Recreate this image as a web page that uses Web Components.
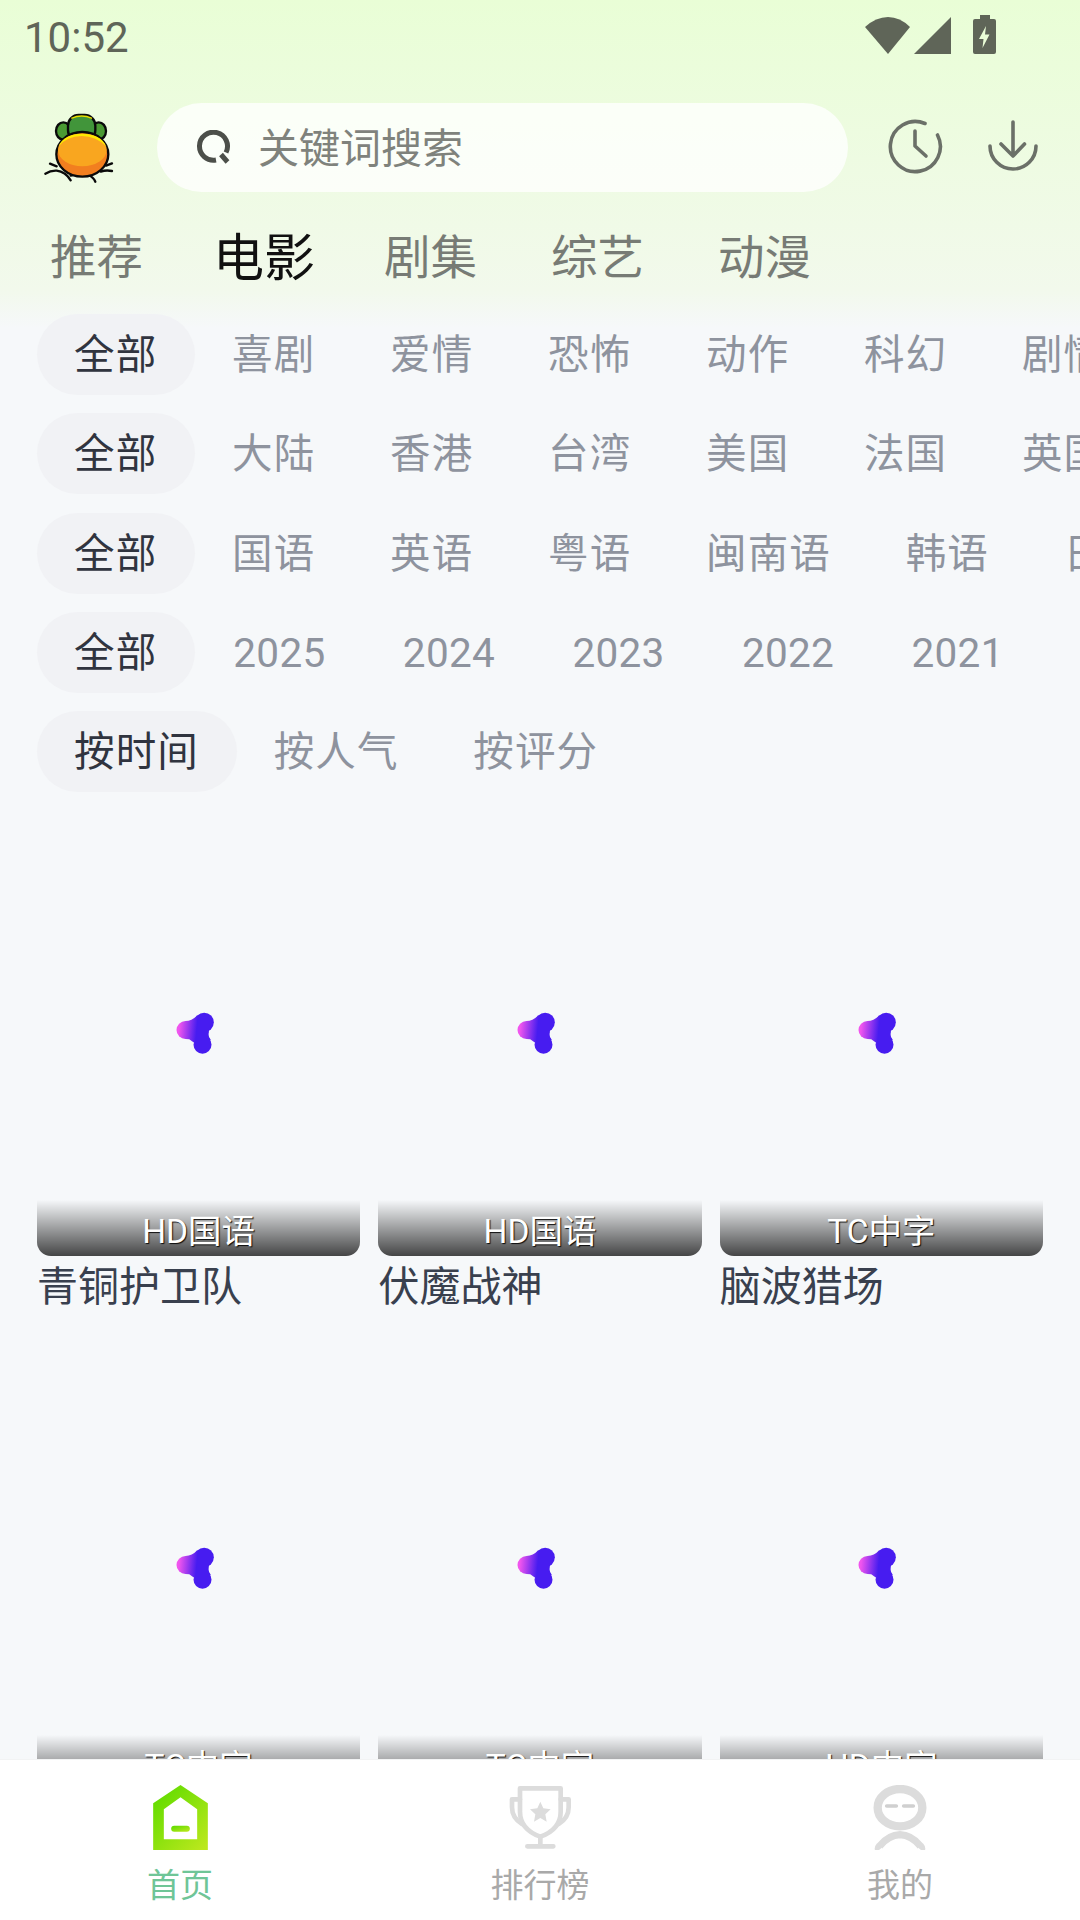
<!DOCTYPE html>
<html lang="zh-CN">
<head>
<meta charset="utf-8">
<title>影视</title>
<style>
  html, body { margin: 0; padding: 0; }
  body {
    width: 1080px; height: 1920px; overflow: hidden;
    font-family: Roboto, "Noto Sans CJK SC", sans-serif;
    background: #f6f8fa;
  }
</style>
</head>
<body>
<app-shell>
  <status-bar time="10:52"></status-bar>
  <top-header placeholder="关键词搜索"></top-header>
  <channel-tabs items="推荐,电影,剧集,综艺,动漫" active="1"></channel-tabs>
  <filter-row items="全部,喜剧,爱情,恐怖,动作,科幻,剧情"></filter-row>
  <filter-row items="全部,大陆,香港,台湾,美国,法国,英国"></filter-row>
  <filter-row items="全部,国语,英语,粤语,闽南语,韩语,日语"></filter-row>
  <filter-row items="全部,2025,2024,2023,2022,2021"></filter-row>
  <filter-row items="按时间,按人气,按评分"></filter-row>
  <movie-grid>
    <movie-card badge="HD国语" name="青铜护卫队"></movie-card>
    <movie-card badge="HD国语" name="伏魔战神"></movie-card>
    <movie-card badge="TC中字" name="脑波猎场"></movie-card>
    <movie-card badge="TC中字"></movie-card>
    <movie-card badge="TC中字"></movie-card>
    <movie-card badge="HD中字"></movie-card>
  </movie-grid>
  <bottom-nav slot="nav">
    <nav-item icon="home" active>首页</nav-item>
    <nav-item icon="trophy">排行榜</nav-item>
    <nav-item icon="me">我的</nav-item>
  </bottom-nav>
</app-shell>

<script>
class AppShell extends HTMLElement {
  connectedCallback() {
    this.attachShadow({ mode: "open" }).innerHTML = `
      <style>
        :host { display: flex; flex-direction: column; width: 1080px; height: 1920px; }
        .main {
          flex: 1; min-height: 0; overflow: hidden;
          background: linear-gradient(180deg, #e9fed6 0, #f2f9ec 290px, #f6f8fa 328px) no-repeat;
        }
      </style>
      <div class="main"><slot></slot></div>
      <slot name="nav"></slot>`;
  }
}

class StatusBar extends HTMLElement {
  connectedCallback() {
    this.attachShadow({ mode: "open" }).innerHTML = `
      <style>
        :host { display: flex; justify-content: space-between; height: 75px; padding: 0 84px 0 24px; color: #5f6558; }
        .time { font-size: 42px; line-height: 75px; }
        svg { display: block; margin-top: 15px; }
      </style>
      <span class="time">${this.getAttribute("time")}</span>
      <svg width="131" height="40" viewBox="865 15 131 40">
        <path d="M888 54 L865 27 Q876 17 888 17 Q900 17 910 27 Z" fill="#5f6558"/>
        <path d="M951 17 V54 H914 Z" fill="#5f6558"/>
        <path d="M980 15 H990 V19 H994 Q996 19 996 21 V52 Q996 54 994 54 H975 Q973 54 973 52 V21 Q973 19 975 19 H980 Z" fill="#5f6558"/>
        <path d="M986 26 L979 39 H983.5 L982.5 48 L989.5 34.5 H985 Z" fill="#e9fdd6"/>
      </svg>`;
  }
}

class TopHeader extends HTMLElement {
  connectedCallback() {
    this.attachShadow({ mode: "open" }).innerHTML = `
      <style>
        :host { display: flex; align-items: center; height: 89px; margin-top: 28px; }
        .logo { flex: none; width: 157px; display: flex; justify-content: center; }
        .search {
          flex: none; width: 691px; height: 89px; box-sizing: border-box; margin-right: 18px;
          display: flex; align-items: center; gap: 27px; padding-left: 39px;
          border-radius: 45px; background: rgba(255,255,255,.78);
          color: #7f827c; font-size: 41px;
        }
        .search span { margin-bottom: 5px; }
        .btn { flex: none; width: 98px; display: flex; justify-content: center; margin-top: -3px; }
        svg { display: block; }
      </style>
      <div class="logo">
        <svg width="100" height="100" viewBox="0 0 300 300" style="margin:6px 0 0 2px">
          <g stroke="#0a0a0a" stroke-width="7">
            <ellipse cx="100" cy="90" rx="22" ry="26" fill="#4a9a33"/>
            <ellipse cx="206" cy="90" rx="22" ry="26" fill="#4a9a33"/>
            <rect x="114" y="42" width="82" height="78" rx="32" fill="#41953a"/>
          </g>
          <path d="M124 52 Q155 38 186 52" fill="none" stroke="#e8e000" stroke-width="4"/>
          <g fill="none" stroke="#0a0a0a" stroke-width="7" stroke-linecap="round">
            <path d="M80 196 L60 188 M46 218 Q62 208 80 209 Q106 212 122 238"/>
            <path d="M122 224 Q155 212 175 222 Q190 228 196 242"/>
            <path d="M228 194 L246 187 M212 212 Q228 206 246 210"/>
          </g>
          <ellipse cx="157" cy="160" rx="78" ry="67" fill="#f27f1f" stroke="#0a0a0a" stroke-width="7"/>
          <ellipse cx="157" cy="147" rx="73" ry="49" fill="#f9a61f"/>
          <path d="M86 136 Q100 100 155 98 Q215 100 228 136 Q200 106 155 105 Q110 106 86 136 Z" fill="#fde900"/>
        </svg>
      </div>
      <div class="search">
        <svg width="35" height="35" viewBox="0 0 35 35" fill="none" stroke="#4c4f4a" stroke-width="5">
          <path d="M20 30 A14 14 0 1 1 30 22.5"/>
          <path d="M25 24.5 L31.5 32"/>
        </svg>
        <span>${this.getAttribute("placeholder")}</span>
      </div>
      <div class="btn">
        <svg width="56" height="56" viewBox="0 0 56 56" fill="none" stroke="#6b7068" stroke-width="3.6" stroke-linecap="round" stroke-linejoin="round">
          <path d="M38 5.5 A25 25 0 1 0 50.5 17"/>
          <path d="M28 13 V28 L39 38"/>
        </svg>
      </div>
      <div class="btn">
        <svg width="56" height="56" viewBox="0 0 56 56" fill="none" stroke="#6b7068" stroke-width="3.6" stroke-linecap="round" stroke-linejoin="round">
          <path d="M28 4 V38 M16 26 L28 38 L39.5 26"/>
          <path d="M5 28 A23 23 0 0 0 51 28"/>
        </svg>
      </div>`;
  }
}

class ChannelTabs extends HTMLElement {
  connectedCallback() {
    const items = this.getAttribute("items").split(",");
    const active = Number(this.getAttribute("active"));
    this.attachShadow({ mode: "open" }).innerHTML = `
      <style>
        :host { display: flex; align-items: center; height: 105px; margin: 9px 0 8px; padding-left: 50px; }
        span { flex: none; width: 167px; font-size: 46.5px; color: #777b75; white-space: nowrap; }
        span.on { font-size: 51px; color: #111; text-indent: -4px; }
      </style>
      ${items.map((t, i) => `<span class="${i === active ? "on" : ""}">${t}</span>`).join("")}`;
  }
}

class FilterRow extends HTMLElement {
  connectedCallback() {
    const items = this.getAttribute("items").split(",");
    this.attachShadow({ mode: "open" }).innerHTML = `
      <style>
        :host {
          display: flex; height: 81px; margin-bottom: 18.25px; padding-left: 37px;
          overflow: hidden;
        }
        span {
          flex: none; padding: 0 37.7px 0 37.1px; line-height: 82px; border-radius: 41px;
          font-size: 40.5px; letter-spacing: 1.1px; color: #8e939e; white-space: nowrap;
        }
        /* years keep the same pitch as the reference but tighter digits */
        span.num { letter-spacing: .3px; padding: 0 39px 0 38.3px; }
        span.on { background: #f1f2f5; color: #30343f; }
      </style>
      ${items.map((t, i) => `<span class="${i === 0 ? "on" : ""} ${/^\d+$/.test(t) ? "num" : ""}">${t}</span>`).join("")}`;
  }
}

class MovieGrid extends HTMLElement {
  connectedCallback() {
    this.attachShadow({ mode: "open" }).innerHTML = `
      <style>
        :host {
          display: grid; grid-template-columns: repeat(3, 1fr); column-gap: 18.25px;
          padding: 0 37px;
        }
      </style>
      <slot></slot>`;
  }
}

class MovieCard extends HTMLElement {
  connectedCallback() {
    const name = this.getAttribute("name") || "";
    this.attachShadow({ mode: "open" }).innerHTML = `
      <style>
        :host { display: block; height: 535px; }
        .poster {
          position: relative; height: 446px; overflow: hidden;
          display: flex; align-items: center; justify-content: center;
          border-radius: 0 0 14px 14px;
        }
        .badge {
          position: absolute; left: 0; right: 0; bottom: 0; height: 56px;
          box-sizing: border-box; padding-top: 1px;
          display: flex; align-items: center; justify-content: center;
          background: linear-gradient(180deg, rgba(0,0,0,0), rgba(0,0,0,.72));
          color: #fff; font-size: 33.5px; text-shadow: 1px 1px 1px rgba(0,0,0,.9);
        }
        .name {
          margin: 0; font-size: 41px; line-height: 62px;
          color: #39404e; white-space: nowrap;
        }
        svg { display: block; }
      </style>
      <div class="poster">
        <svg width="100" height="80" viewBox="-4.5 9 300 240">
          <defs>
            <linearGradient id="g" gradientUnits="userSpaceOnUse" x1="85" y1="120" x2="138" y2="125">
              <stop offset="0" stop-color="#f055ee"/>
              <stop offset="1" stop-color="#471cf0"/>
            </linearGradient>
          </defs>
          <g fill="url(#g)">
            <circle cx="161" cy="97" r="29"/>
            <circle cx="105" cy="120" r="27"/>
            <circle cx="156" cy="164" r="27"/>
            <circle cx="142" cy="127" r="32"/>
            <path d="M105 93 Q125 93 140 76 L178 118 Q168 132 181 150 L131 160 Q130 147 105 147 Z"/>
          </g>
        </svg>
        <div class="badge">${this.getAttribute("badge")}</div>
      </div>
      ${name ? `<p class="name">${name}</p>` : ""}`;
  }
}

class BottomNav extends HTMLElement {
  connectedCallback() {
    this.attachShadow({ mode: "open" }).innerHTML = `
      <style>
        :host {
          display: grid; grid-template-columns: repeat(3, 1fr); height: 160px;
          background: #fff; border-top: 1px solid #f2f3f4;
        }
      </style>
      <slot></slot>`;
  }
}

const NAV_ICONS = {
  home: `<svg width="55" height="65" viewBox="68 45 164 195">
      <defs><linearGradient id="h" x1="0.1" y1="0.1" x2="0.9" y2="1">
        <stop offset="0" stop-color="#62dc00"/><stop offset="1" stop-color="#bbe81d"/>
      </linearGradient></defs>
      <path fill-rule="evenodd" fill="url(#h)" d="M150 45 L232 100 V240 H68 V100 Z M150 82 L100 118 V208 H200 V118 Z"/>
      <rect x="122" y="167" width="56" height="18" rx="9" fill="url(#h)"/>
    </svg>`,
  trophy: `<svg width="62" height="65" viewBox="85 45 186 195" fill="none" stroke="#dcdcdc" stroke-width="14" stroke-linejoin="round" stroke-linecap="round">
      <path d="M118 55 H240 V125 C240 165 212 188 179 200 C146 188 118 165 118 125 Z"/>
      <path d="M118 88 H94 V112 C94 135 104 150 124 162"/>
      <path d="M240 88 H264 V112 C264 135 254 150 234 162"/>
      <path d="M179 200 V228 M140 229 H218"/>
      <path d="M179 95 L188 115 L210 118 L194 133 L198 155 L179 144 L160 155 L164 133 L148 118 L170 115 Z" fill="#dcdcdc" stroke="none"/>
    </svg>`,
  me: `<svg width="54" height="65" viewBox="98 45 162 195" fill="none" stroke="#dcdcdc">
      <ellipse cx="179" cy="113" rx="67" ry="56" stroke-width="25"/>
      <path d="M116 240 Q112 235 118 228 Q145 195 179 194 Q213 195 240 228 Q246 235 242 240" stroke-width="22" stroke-linecap="butt"/>
      <path d="M139 108 H168 M190 108 H219" stroke="#d0d0d0" stroke-width="11" stroke-linecap="round"/>
    </svg>`,
};

class NavItem extends HTMLElement {
  connectedCallback() {
    const on = this.hasAttribute("active");
    this.attachShadow({ mode: "open" }).innerHTML = `
      <style>
        :host { display: flex; flex-direction: column; align-items: center; padding-top: 25px; }
        .icon { height: 65px; }
        svg { display: block; }
        .label { margin-top: 14px; font-size: 33px; line-height: 44px; color: ${on ? "#6fc597" : "#a9a9a9"}; }
      </style>
      <div class="icon">${NAV_ICONS[this.getAttribute("icon")]}</div>
      <div class="label"><slot></slot></div>`;
  }
}

customElements.define("app-shell", AppShell);
customElements.define("status-bar", StatusBar);
customElements.define("top-header", TopHeader);
customElements.define("channel-tabs", ChannelTabs);
customElements.define("filter-row", FilterRow);
customElements.define("movie-grid", MovieGrid);
customElements.define("movie-card", MovieCard);
customElements.define("bottom-nav", BottomNav);
customElements.define("nav-item", NavItem);
</script>
</body>
</html>
